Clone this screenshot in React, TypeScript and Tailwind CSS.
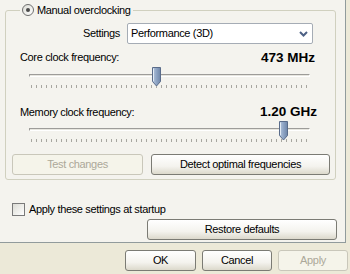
import React from "react";

const font = { fontFamily: '"Liberation Sans", Arial, sans-serif' };

function Thumb({ left }: { left: number }) {
  return (
    <svg
      width="11"
      height="20"
      viewBox="0 0 11 20"
      className="absolute top-[-8px]"
      style={{ left }}
    >
      <defs>
        <linearGradient id="tg" x1="0" y1="0" x2="1" y2="0">
          <stop offset="0" stopColor="#b7c7dc" />
          <stop offset="0.5" stopColor="#8ea4c4" />
          <stop offset="1" stopColor="#6f86a8" />
        </linearGradient>
      </defs>
      <path
        d="M1.5 0.5 H9.5 V14.5 L5.5 19 L1.5 14.5 Z"
        fill="url(#tg)"
        stroke="#5a6c8a"
        strokeWidth="1"
      />
      <path d="M2.5 1.5 V14" stroke="#e4ecf5" strokeWidth="1" />
    </svg>
  );
}

function Slider({ thumb }: { thumb: number }) {
  return (
    <div className="relative ml-[23px] w-[281px] h-[22px]">
      <div className="relative mt-[8px] h-[3px] border-t border-[#9d9c99] border-b border-b-white bg-[#e7e6df] border-l border-l-[#9d9c99] border-r border-r-white">
        <Thumb left={thumb} />
      </div>
      <div className="mt-[8px] ml-[2px] w-[276px] h-[3px] bg-[repeating-linear-gradient(90deg,#a7a6a0_0_1px,transparent_1px_5px)]" />
    </div>
  );
}

function Btn({
  children,
  disabled,
  className,
}: {
  children: React.ReactNode;
  disabled?: boolean;
  className?: string;
}) {
  return (
    <div
      className={
        "flex items-center justify-center h-[21px] rounded-[3px] border text-[11px] " +
        (disabled
          ? "border-[#c9c7ba] text-[#aca899] bg-[#f5f4ea] "
          : "border-[#7b7b74] text-black bg-[linear-gradient(180deg,#ffffff_0%,#f4f3ee_60%,#dcd9cc_100%)] ") +
        (className ?? "")
      }
    >
      {children}
    </div>
  );
}

export default function App() {
  return (
    <div
      className="w-[350px] h-[274px] overflow-hidden bg-[#ece9d8] text-[11px] tracking-[-0.35px] text-black"
      style={font}
    >
      <div className="w-[346px] h-[243px] border-r border-b border-[#919b9c] bg-[#f4f3ee] flex flex-col">
        <fieldset className="ml-[5px] mt-[3px] w-[331px] h-[177px] border border-[#d0d0bf] rounded-[3px] px-0">
          <legend className="ml-[14px] px-[2px] flex items-center gap-[3px]">
            <span className="w-[12px] h-[12px] rounded-full border border-[#6f6f6f] bg-[linear-gradient(135deg,#dcdcd5,#ffffff)] flex items-center justify-center">
              <span className="w-[4px] h-[4px] rounded-full bg-[#4a4a4a]" />
            </span>
            <span className="leading-[14px]">Manual overclocking</span>
          </legend>
          <div className="flex items-center mt-[6px]">
            <span className="ml-[74px] w-[40px] text-right">Settings</span>
            <div className="ml-[7px] w-[186px] h-[21px] border border-[#a5acb5] rounded-[2px] bg-white flex items-center justify-between pl-[3px] pr-[4px]">
              <span>Performance (3D)</span>
              <svg width="9" height="6" viewBox="0 0 9 6">
                <path d="M1 1 L4.5 4.5 L8 1" fill="none" stroke="#4d6185" strokeWidth="2" />
              </svg>
            </div>
          </div>
          <div className="flex items-end justify-between mt-[5px] ml-[14px] w-[295px]">
            <span>Core clock frequency:</span>
            <span className="font-bold text-[13.5px] tracking-normal leading-[16px]">473 MHz</span>
          </div>
          <Slider thumb={121} />
          <div className="flex items-end justify-between mt-[8px] ml-[14px] w-[297px]">
            <span>Memory clock frequency:</span>
            <span className="font-bold text-[13.5px] tracking-normal leading-[16px]">1.20 GHz</span>
          </div>
          <Slider thumb={248} />
          <div className="flex mt-[4px] ml-[6px] gap-[8px]">
            <Btn disabled className="w-[131px]">Test changes</Btn>
            <Btn className="w-[179px]">Detect optimal frequencies</Btn>
          </div>
        </fieldset>
        <div className="flex items-center mt-[21px] ml-[12px] gap-[4px]">
          <span className="w-[13px] h-[13px] border border-[#7a7a7a] bg-[linear-gradient(135deg,#dcdcd5,#ffffff)]" />
          <span>Apply these settings at startup</span>
        </div>
        <div className="flex justify-end mt-[1px] mr-[8px]">
          <Btn className="w-[190px] h-[20px]">Restore defaults</Btn>
        </div>
      </div>
      <div className="flex justify-end gap-[6px] mt-[7px] mr-[2px]">
        <Btn className="w-[71px]">OK</Btn>
        <Btn className="w-[70px]">Cancel</Btn>
        <Btn disabled className="w-[70px]">Apply</Btn>
      </div>
    </div>
  );
}
